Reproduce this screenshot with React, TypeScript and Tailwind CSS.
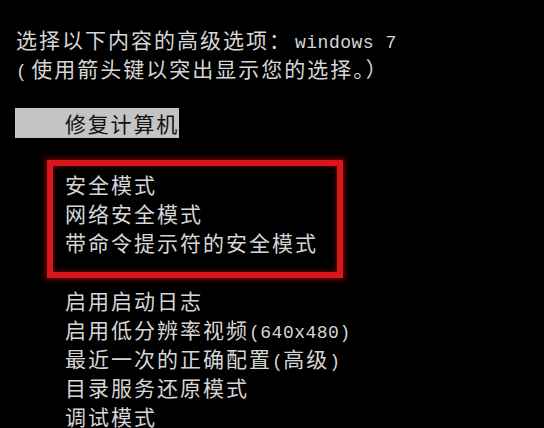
import React from "react";

const cjk = { fontFamily: '"Noto Sans CJK SC", "Noto Sans", sans-serif' };

function M({ children }: { children: React.ReactNode }) {
  return (
    <span className="font-['Liberation_Mono',monospace] text-[18px] tracking-[0.5px]">
      {children}
    </span>
  );
}

function Row({ children }: { children: React.ReactNode }) {
  return <div className="h-[29px] leading-[29px] whitespace-nowrap">{children}</div>;
}

export default function App() {
  return (
    <div
      className="w-[544px] h-[428px] bg-black overflow-hidden text-[#d6d6d6] text-[21px] tracking-[2px]"
      style={cjk}
    >
      <div className="pt-[25px] pl-[16px]">
        <Row>
          选择以下内容的高级选项：<span className="ml-[3px]"><M>windows 7</M></span>
        </Row>
        <Row>
          <span className="mr-[4px]"><M>(</M></span>使用箭头键以突出显示您的选择。）
        </Row>
      </div>
      <div className="mt-[25px] ml-[15px] w-[164px] h-[30px] bg-[#c4c4c4] text-[#111] pl-[50px] leading-[30px] whitespace-nowrap tracking-[1.8px]">
        修复计算机
      </div>
      <div className="mt-[22px] ml-[47px] w-[296px] h-[118px] border-[6px] border-[#d8171c] shadow-[0_0_5px_2px_rgba(190,0,0,0.55),inset_0_0_4px_1px_rgba(150,0,0,0.6)] pt-[4px] pl-[12px]">
        <Row>安全模式</Row>
        <Row>网络安全模式</Row>
        <Row>带命令提示符的安全模式</Row>
      </div>
      <div className="mt-[8px] pl-[65px]">
        <Row>启用启动日志</Row>
        <Row>
          启用低分辨率视频<M>(640x480)</M>
        </Row>
        <Row>
          最近一次的正确配置<M>(</M>高级<M>)</M>
        </Row>
        <Row>目录服务还原模式</Row>
        <Row>调试模式</Row>
      </div>
    </div>
  );
}
